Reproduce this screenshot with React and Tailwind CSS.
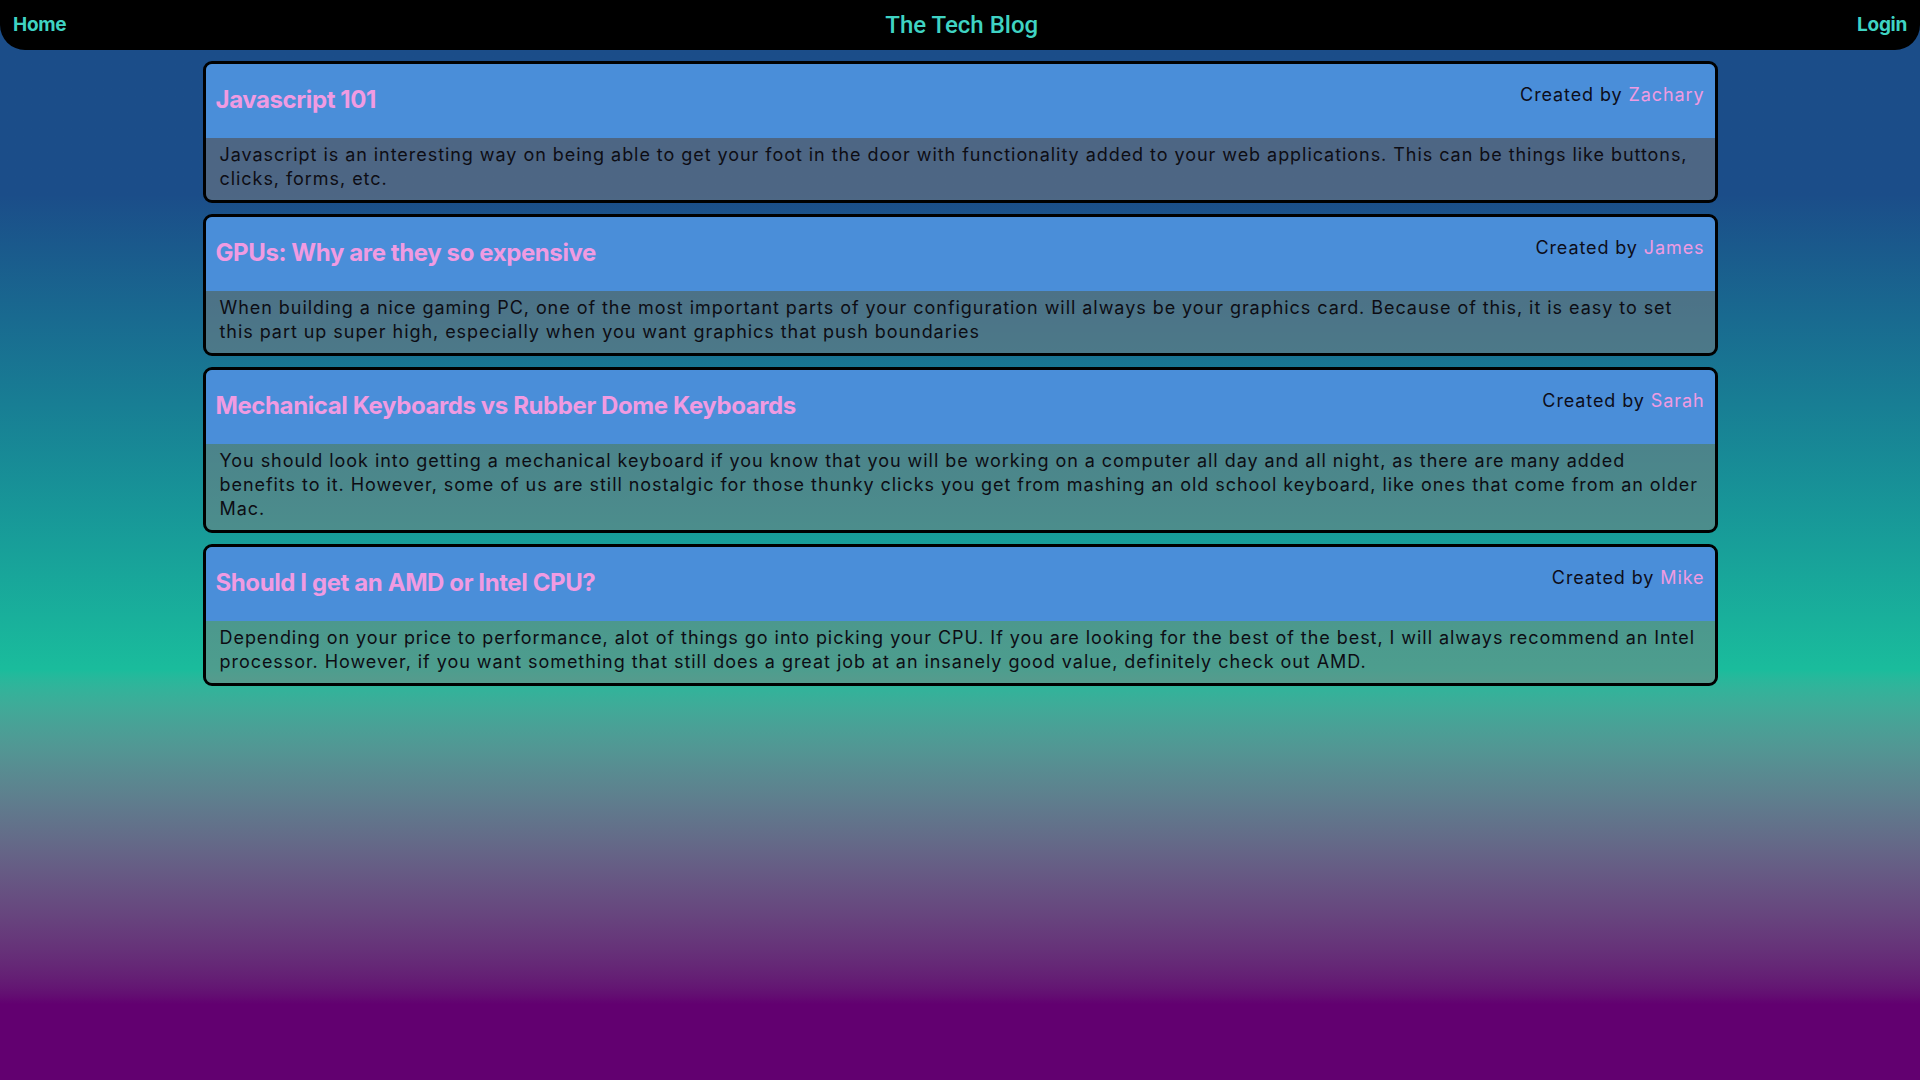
import React from "react";

const posts = [
  {
    title: "Javascript 101",
    author: "Zachary",
    body: "Javascript is an interesting way on being able to get your foot in the door with functionality added to your web applications. This can be things like buttons, clicks, forms, etc.",
  },
  {
    title: "GPUs: Why are they so expensive",
    author: "James",
    body: "When building a nice gaming PC, one of the most important parts of your configuration will always be your graphics card. Because of this, it is easy to set this part up super high, especially when you want graphics that push boundaries",
  },
  {
    title: "Mechanical Keyboards vs Rubber Dome Keyboards",
    author: "Sarah",
    body: "You should look into getting a mechanical keyboard if you know that you will be working on a computer all day and all night, as there are many added benefits to it. However, some of us are still nostalgic for those thunky clicks you get from mashing an old school keyboard, like ones that come from an older Mac.",
  },
  {
    title: "Should I get an AMD or Intel CPU?",
    author: "Mike",
    body: "Depending on your price to performance, alot of things go into picking your CPU. If you are looking for the best of the best, I will always recommend an Intel processor. However, if you want something that still does a great job at an insanely good value, definitely check out AMD.",
  },
];

export default function App() {
  return (
    <div className="min-h-screen w-full bg-linear-to-b from-[#1b4d89] from-[18%] via-[#1abc9c] via-[62%] to-[#620070] to-[93%] font-['Inter',sans-serif] text-[#111]">
      <nav className="h-[50px] bg-black rounded-b-[25px] flex items-center justify-between px-[13px]">
        <a className="text-[19px] font-bold text-[#3fd3c3] tracking-[-0.3px]">Home</a>
        <h1 className="font-['Roboto',sans-serif] font-medium text-[24px] text-[#3fd3c3] leading-none">The Tech Blog</h1>
        <a className="text-[19px] font-bold text-[#3fd3c3] tracking-[-0.3px]">Login</a>
      </nav>
      <main className="w-[1515px] mx-auto pt-[11px] flex flex-col gap-[11px]">
        {posts.map((p) => (
          <article key={p.title} className="border-[3px] border-black rounded-[9px] overflow-hidden">
            <header className="bg-[#4a8ed9] h-[74px] flex justify-between items-start px-[10px]">
              <h2 className="mt-[22px] text-[24px] leading-[28px] font-bold text-[#f09be2] tracking-[-0.4px]">
                {p.title}
              </h2>
              <p className="mt-[19px] text-[18px] leading-[24px] tracking-[0.9px] text-[#0d0d1a]">
                Created by <span className="text-[#f09be2]">{p.author}</span>
              </p>
            </header>
            <div className="bg-[rgba(128,128,128,0.5)] pt-[5px] pb-[9px] px-[14px] text-[18px] leading-[24px] tracking-[0.95px] text-[#0d0d14]">
              {p.body}
            </div>
          </article>
        ))}
      </main>
    </div>
  );
}
